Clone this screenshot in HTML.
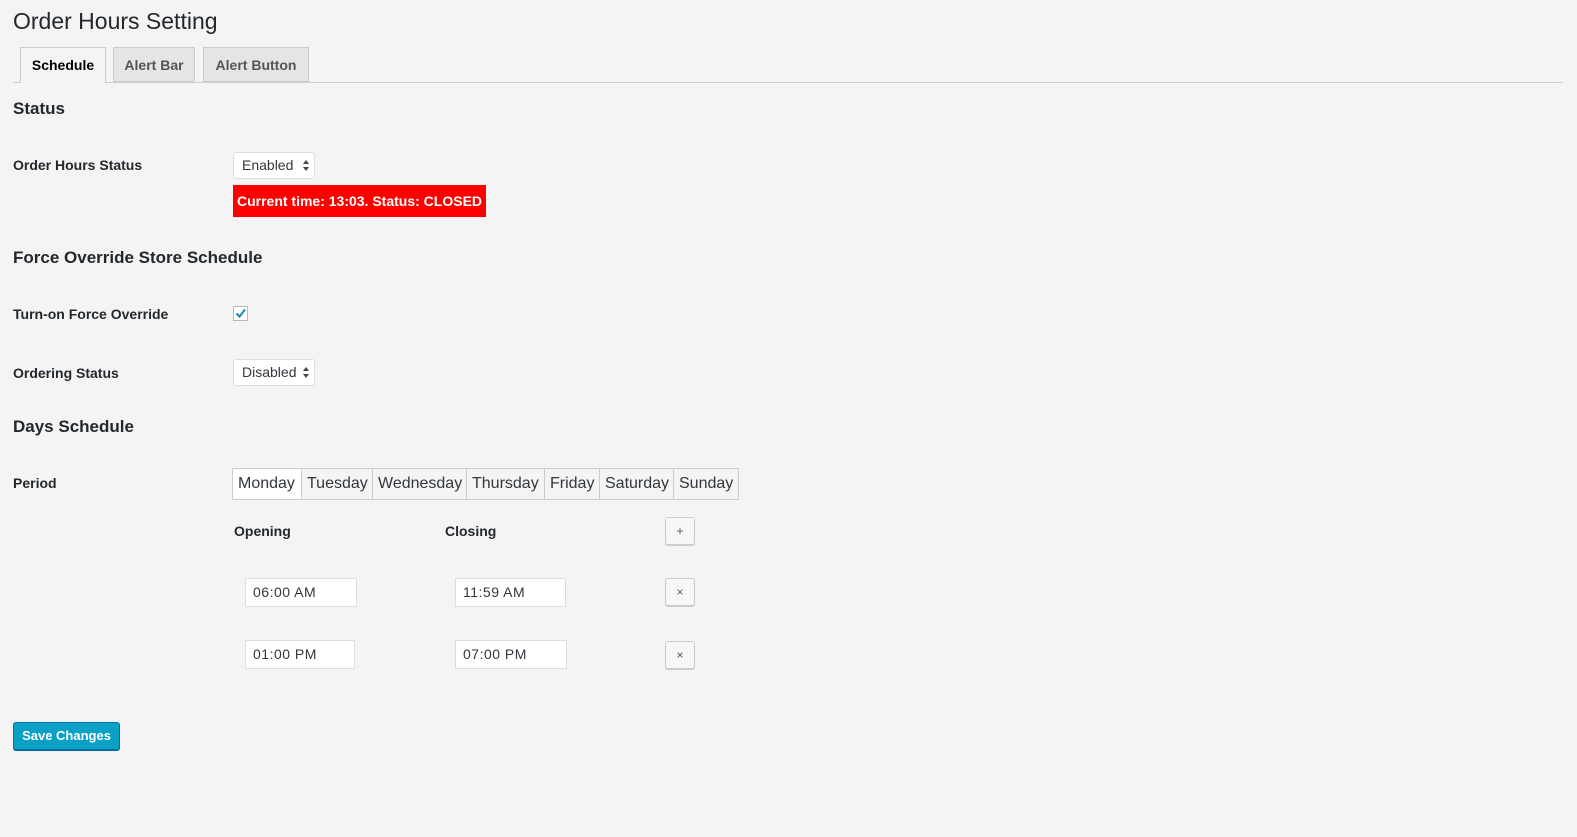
<!DOCTYPE html>
<html><head><style>
body{margin:0;width:1577px;height:837px;background:#f4f4f4;font-family:"Liberation Sans",sans-serif;color:#23282d;position:relative;overflow:hidden}
.a{position:absolute;white-space:nowrap}
.b{font-weight:bold;font-size:14px}
.h{font-weight:bold;font-size:17px}
.tab{position:absolute;top:47px;height:35px;border:1px solid #ccc;background:#e5e5e5;font-weight:bold;font-size:14px;color:#555;line-height:35px;text-align:center;box-sizing:border-box}
.sel{position:absolute;height:27px;background:#fff;border:1px solid #ddd;border-radius:3px;font-size:14px;line-height:25px;padding-left:8px;box-sizing:border-box;color:#32373c}
.sel:after{content:"";position:absolute;right:5px;top:7px;border:3px solid transparent;border-bottom:4px solid #444;border-top:0}
.sel:before{content:"";position:absolute;right:5px;top:14px;border:3px solid transparent;border-top:4px solid #444;border-bottom:0}
.inp{position:absolute;height:29px;background:#fff;border:1px solid #ddd;font-size:14px;line-height:27px;padding-left:7px;box-sizing:border-box;letter-spacing:.5px;color:#32373c}
.btn{position:absolute;left:665px;width:30px;height:28px;border:1px solid #ccc;border-radius:3px;background:#f7f7f7;box-shadow:0 1px 0 #ccc;box-sizing:border-box;text-align:center;line-height:26px;font-size:12px;color:#555}
.day{display:inline-block;height:30px;line-height:30px;border-right:1px solid #ccc;padding:0 5px;font-size:16px;color:#32373c;background:#f4f4f4;box-sizing:border-box}
</style></head><body>
<div class="a" style="left:13px;top:8px;font-size:23px;color:#23282d">Order Hours Setting</div>
<div class="a" style="left:13px;top:82px;width:1550px;height:1px;background:#ccc"></div>
<div class="tab" style="left:20px;width:86px;height:36px;background:#f4f4f4;border-bottom:none;color:#000">Schedule</div>
<div class="tab" style="left:113px;width:82px">Alert Bar</div>
<div class="tab" style="left:203px;width:106px">Alert Button</div>

<div class="a h" style="left:13px;top:99px">Status</div>
<div class="a b" style="left:13px;top:157px">Order Hours Status</div>
<div class="sel" style="left:233px;top:152px;width:82px">Enabled</div>
<div class="a" style="left:233px;top:185px;width:253px;height:32px;background:#ff0000;color:#fff;font-size:14px;font-weight:bold;line-height:32px;text-align:center">Current time: 13:03. Status: CLOSED</div>

<div class="a h" style="left:13px;top:248px">Force Override Store Schedule</div>
<div class="a b" style="left:13px;top:306px">Turn-on Force Override</div>
<div class="a" style="left:233px;top:306px;width:15px;height:15px;background:#fff;border:1px solid #b4b9be;box-sizing:border-box"><svg width="13" height="13" style="position:absolute;left:0;top:0"><path d="M2.5 6.5 L5.5 9.5 L11 2.5" stroke="#1e8cbe" stroke-width="2.2" fill="none"/></svg></div>
<div class="a b" style="left:13px;top:365px">Ordering Status</div>
<div class="sel" style="left:233px;top:359px;width:82px">Disabled</div>

<div class="a h" style="left:13px;top:417px">Days Schedule</div>
<div class="a b" style="left:13px;top:475px">Period</div>
<div class="a" style="left:232px;top:468px;border:1px solid #ccc;border-right:none;height:32px;box-sizing:border-box;font-size:0"><span class="day" style="background:#fff;width:69px">Monday</span><span class="day" style="width:71px">Tuesday</span><span class="day" style="width:94px">Wednesday</span><span class="day" style="width:78px">Thursday</span><span class="day" style="width:55px">Friday</span><span class="day" style="width:74px">Saturday</span><span class="day" style="width:65px">Sunday</span></div>

<div class="a b" style="left:234px;top:523px">Opening</div>
<div class="a b" style="left:445px;top:523px">Closing</div>
<div class="btn" style="top:517px">+</div>
<div class="inp" style="left:245px;top:578px;width:112px">06:00 AM</div>
<div class="inp" style="left:455px;top:578px;width:111px">11:59 AM</div>
<div class="btn" style="top:578px">×</div>
<div class="inp" style="left:245px;top:640px;width:110px">01:00 PM</div>
<div class="inp" style="left:455px;top:640px;width:112px">07:00 PM</div>
<div class="btn" style="top:641px">×</div>

<div class="a" style="left:13px;top:722px;width:107px;height:28px;background:#0ba1c7;border:1px solid #0073aa;border-radius:3px;box-shadow:0 1px 0 #006799;box-sizing:border-box;color:#fff;font-size:13px;font-weight:bold;text-align:center;line-height:26px">Save Changes</div>
</body></html>
